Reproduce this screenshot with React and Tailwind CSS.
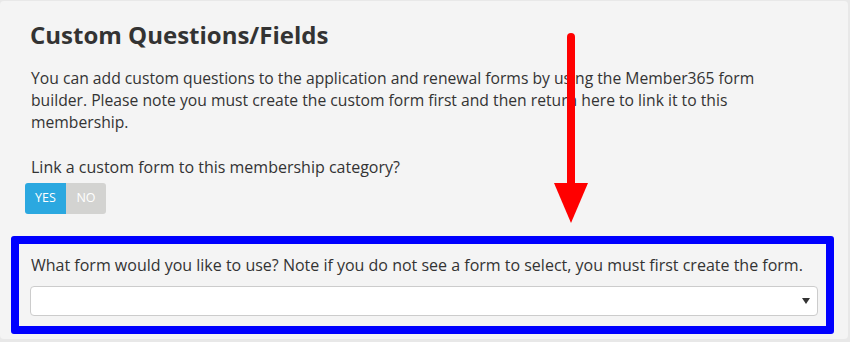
export default function App() {
  return (
    <div className="w-[850px] h-[342px] bg-[#e8e8e8] pt-[1px] font-['Open_Sans',sans-serif] text-[#333]">
      <div className="relative w-[848px] h-[338px] bg-[#f4f4f4] rounded-[4px] pt-[21px]">
        <h2 className="pl-[30px] text-[24px] leading-[26px] font-bold text-[#333]">Custom Questions/Fields</h2>
        <p className="mt-[19px] ml-[31px] w-[770px] text-[15.7px] leading-[22px]">
          You can add custom questions to the application and renewal forms by using the Member365 form builder. Please note you must create the custom form first and then return here to link it to this membership.
        </p>
        <p className="mt-[23px] pl-[31px] text-[16px] leading-[22px]">Link a custom form to this membership category?</p>
        <div className="mt-[5px] ml-[25px] flex h-[31px] w-[81px] text-[12.5px] text-white">
          <span className="flex w-[41px] items-center justify-center rounded-l-[3px] bg-[#2ba8e0]">YES</span>
          <span className="flex w-[40px] items-center justify-center rounded-r-[3px] bg-[#d3d3d1]">NO</span>
        </div>
        <div className="mt-[22px] ml-[11px] w-[823px] h-[98px] rounded-[3px] border-[8px] border-[#0000ff] pt-[10px] pl-[11px] pr-[8px]">
          <p className="pl-[1px] text-[16px] leading-[22px] whitespace-nowrap">What form would you like to use? Note if you do not see a form to select, you must first create the form.</p>
          <div className="mt-[10px] flex h-[30px] items-center justify-end rounded-[4px] border border-[#cccccc] bg-white pr-[7px]">
            <svg width="8" height="6" viewBox="0 0 8 6"><path d="M0 0 H8 L4 6 Z" fill="#333" /></svg>
          </div>
        </div>
        <svg className="absolute left-[550px] top-[28px]" width="42" height="198" viewBox="550 28 42 198">
          <line x1="571" y1="36" x2="571" y2="186" stroke="#ff0000" strokeWidth="8" strokeLinecap="round" />
          <path d="M554 182 L588 182 L571 222 Z" fill="#ff0000" />
        </svg>
      </div>
    </div>
  );
}
